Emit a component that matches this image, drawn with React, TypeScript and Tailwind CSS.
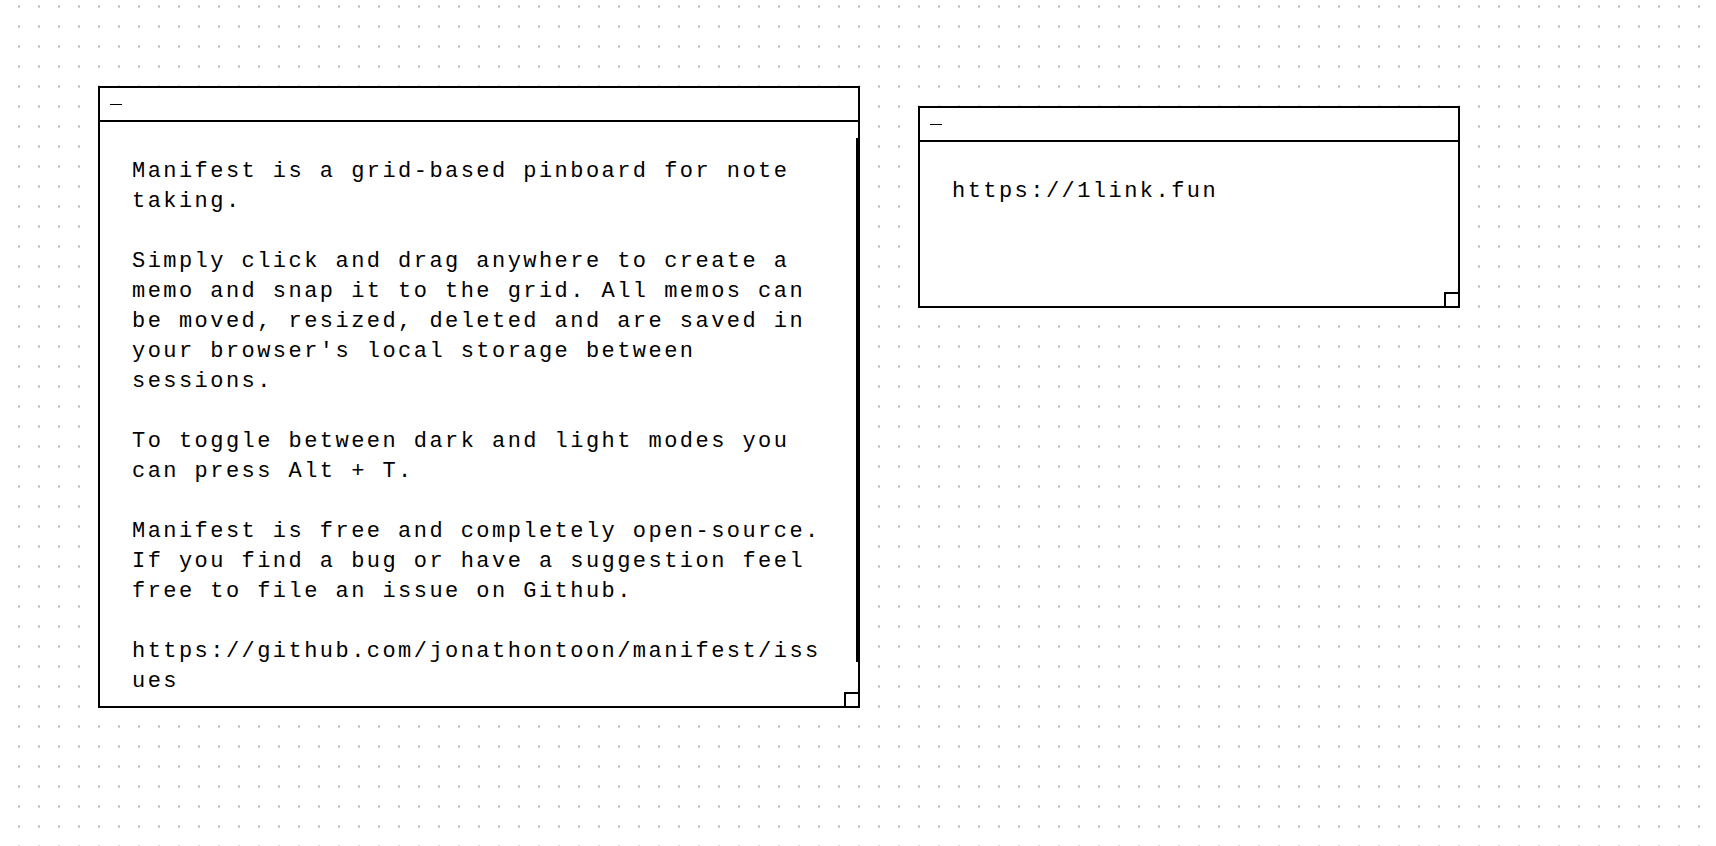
import React from 'react';

const welcome = [
  'Manifest is a grid-based pinboard for note',
  'taking.',
  '',
  'Simply click and drag anywhere to create a',
  'memo and snap it to the grid. All memos can',
  'be moved, resized, deleted and are saved in',
  "your browser's local storage between",
  'sessions.',
  '',
  'To toggle between dark and light modes you',
  'can press Alt + T.',
  '',
  'Manifest is free and completely open-source.',
  'If you find a bug or have a suggestion feel',
  'free to file an issue on Github.',
  '',
  'https://github.com/jonathontoon/manifest/iss',
  'ues',
].join('\n');

const MemoHeader: React.FC = () => (
  <div className="h-[34px] shrink-0 border-b-2 border-black flex items-center pl-[10px]">
    <span className="block w-[12px] h-px bg-black" aria-label="minimise" />
  </div>
);

const ResizeHandle: React.FC = () => (
  <div className="absolute right-0 bottom-0 w-[14px] h-[14px] border-l-2 border-t-2 border-black bg-white" />
);

export default function App() {
  return (
    <div
      className="relative w-screen h-screen overflow-hidden bg-white bg-[radial-gradient(circle,#b4b4b4_1px,transparent_1.4px)] bg-[size:20px_20px] bg-[position:9px_-3.5px] font-['Liberation_Mono',monospace] text-black"
    >
      {/* welcome memo */}
      <div className="absolute left-[98px] top-[86px] w-[762px] h-[622px] border-2 border-black bg-white flex flex-col">
        <MemoHeader />
        <div className="relative flex-1 overflow-hidden">
          <div className="whitespace-pre pl-[32px] pt-[35px] text-[22px] leading-[30px] tracking-[2.45px]">
            {welcome}
          </div>
          <div className="absolute right-0 top-[16px] w-[2px] h-[524px] bg-black" />
        </div>
        <ResizeHandle />
      </div>

      {/* link memo */}
      <div className="absolute left-[918px] top-[106px] w-[542px] h-[202px] border-2 border-black bg-white flex flex-col">
        <MemoHeader />
        <div className="flex-1 overflow-hidden">
          <div className="whitespace-pre pl-[32px] pt-[35px] text-[22px] leading-[30px] tracking-[2.45px]">
            https://1link.fun
          </div>
        </div>
        <ResizeHandle />
      </div>
    </div>
  );
}
